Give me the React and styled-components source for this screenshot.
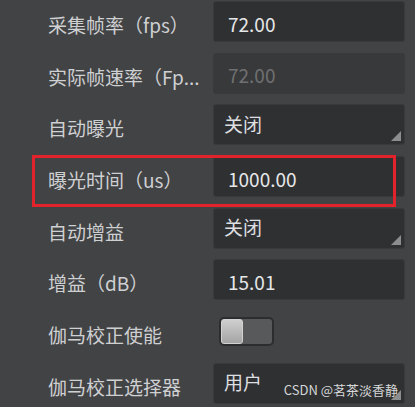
import React from 'react';
import styled, { createGlobalStyle } from 'styled-components';

const GlobalStyle = createGlobalStyle`
    html, body {
        margin: 0;
        padding: 0;
        background-color: #424345;
    }
    body {
        font-family: "Noto Sans CJK SC", "Noto Sans", sans-serif;
    }
`

const rows = [
    { label: '采集帧率（fps）', kind: 'edit', value: '72.00' },
    { label: '实际帧速率（Fp...', kind: 'edit', value: '72.00', disabled: true },
    { label: '自动曝光', kind: 'select', value: '关闭' },
    { label: '曝光时间（us）', kind: 'edit', value: '1000.00', marked: true },
    { label: '自动增益', kind: 'select', value: '关闭' },
    { label: '增益（dB）', kind: 'edit', value: '15.01' },
    { label: '伽马校正使能', kind: 'switch' },
    { label: '伽马校正选择器', kind: 'select', value: '用户', watermark: true },
];

const App = () => {
  return (
        <Panel>
            <GlobalStyle />
            {rows.map((row) => (
                <Row key={row.label}>
                    <Label>{row.label}</Label>
                    {row.kind === 'edit' && (
                        <Field disabled={row.disabled}>{row.value}</Field>
                    )}
                    {row.kind === 'select' && (
                        <Select>
                            {row.value}
                            {row.watermark && <Watermark>CSDN @茗茶淡香静</Watermark>}
                        </Select>
                    )}
                    {row.kind === 'switch' && (
                        <Toggle>
                            <Knob />
                        </Toggle>
                    )}
                    {row.marked && <Highlight />}
                </Row>
            ))}
        </Panel>
  );
}

export default App;

const Panel = styled.div`
    width: 415px;
    height: 407px;
    overflow: hidden;
    padding-top: 1px;
    box-sizing: border-box;
    display: flex;
    flex-direction: column;
    gap: 10.7px;
`
const Row = styled.div`
    position: relative;
    display: grid;
    grid-template-columns: 213px 192px;
    align-items: center;
    height: 41px;
    flex-shrink: 0;
`
const Label = styled.div`
    padding-left: 48px;
    padding-top: 6px;
    font-size: 19px;
    color: #cfd0d2;
    white-space: nowrap;
`
const Box = styled.div`
    position: relative;
    height: 41px;
    box-sizing: border-box;
    border: 1px solid #393a3c;
    border-radius: 3px;
    display: flex;
    align-items: center;
    font-size: 19px;
`
const Field = styled(Box)`
    padding: 3px 0 0 14px;
    background-color: ${(p) => (p.disabled ? '#38393b' : '#2f3032')};
    color: ${(p) => (p.disabled ? '#6f7071' : '#e6e7e8')};
`
const Select = styled(Box)`
    padding: 0 0 3px 10px;
    background-color: #2f3032;
    color: #dedfe0;
    &::after{
        content: '';
        position: absolute;
        right: 3px;
        bottom: 3px;
        width: 0;
        height: 0;
        border-style: solid;
        border-width: 0 0 10px 10px;
        border-color: transparent transparent #8c8d8f transparent;
    }
`
const Watermark = styled.span`
    position: absolute;
    right: 6px;
    bottom: 4px;
    font-size: 13px;
    color: #d6d7d8;
    z-index: 1;
`
const Toggle = styled.div`
    width: 55px;
    height: 29px;
    margin-left: 6px;
    box-sizing: border-box;
    border: 2px solid #2c2d2f;
    border-radius: 5px;
    background-color: #58595b;
    display: flex;
`
const Knob = styled.div`
    width: 22px;
    height: 100%;
    border-radius: 3px;
    box-sizing: border-box;
    border: 1px solid #d2d2d2;
    background: linear-gradient(#cfcfcf, #a4a4a4);
`
const Highlight = styled.div`
    position: absolute;
    left: 32px;
    top: -1px;
    width: 364px;
    height: 52px;
    box-sizing: border-box;
    border: 3px solid #e3232b;
    z-index: 2;
    pointer-events: none;
`
